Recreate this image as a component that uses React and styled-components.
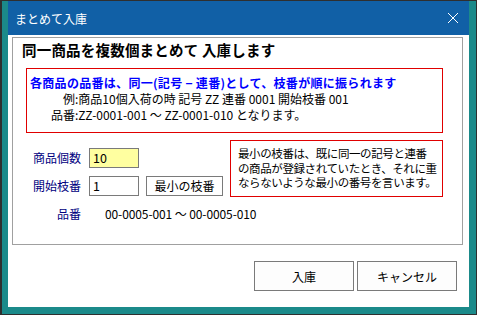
import React from "react";
import styled, { createGlobalStyle } from "styled-components";

const Global = createGlobalStyle`
  html, body { margin: 0; padding: 0; background: #2b2b2b; }
  * { box-sizing: border-box; }
`;

const FONT = `"Noto Sans CJK JP", "Noto Sans", sans-serif`;

const Window = styled.div`
  width: 477px;
  height: 315px;
  background: #1b8a8a;
  border-style: solid;
  border-color: #2f2f2f;
  border-width: 1px 1px 1px 2px;
  padding: 0 7px 7px 6px;
  display: flex;
  flex-direction: column;
  font-family: ${FONT};
  font-size: 12px;
  color: #000;
`;

const TitleBar = styled.div`
  height: 34px;
  flex: none;
  background: #1160a6;
  display: flex;
  align-items: center;
  justify-content: space-between;
  padding: 0 10px 0 7px;
  color: #fff;
  font-size: 12px;
`;

const CloseIcon = () => (
  <svg width="12" height="12" viewBox="0 0 12 12">
    <path d="M1 1 L11 11 M11 1 L1 11" stroke="#fff" strokeWidth="1" fill="none" />
  </svg>
);

const Body = styled.div`
  flex: 1;
  background: #fff;
  display: flex;
  flex-direction: column;
  padding: 2px 6px 0 4px;
`;

const Group = styled.div`
  height: 208px;
  border: 1px solid #a0a0a0;
  padding: 1px 19px 0 13px;
  display: flex;
  flex-direction: column;
`;

const Heading = styled.div`
  font-size: 14.5px;
  font-weight: bold;
  line-height: 22px;
  height: 22px;
  margin-left: -4px;
  letter-spacing: 0.2px;
`;

const RedBox = styled.div`
  border: 1px solid #e00000;
  line-height: ${(p) => p.$lh || 16}px;
  padding: ${(p) => p.$pad};
`;

const InfoBox = styled(RedBox)`
  height: 65px;
  margin-top: 7px;
`;

const InfoLine = styled.div`
  color: ${(p) => (p.$blue ? "#0000ff" : "#000")};
  font-weight: ${(p) => (p.$blue ? "bold" : "normal")};
  padding-left: ${(p) => p.$indent || 0}px;
  line-height: ${(p) => p.$lh || 16}px;
  letter-spacing: ${(p) => (p.$blue ? "0.3px" : "0")};
  white-space: nowrap;
`;

const Lower = styled.div`
  margin-top: 7px;
  display: grid;
  grid-template-columns: minmax(0, 1fr) 213px;
  align-items: start;
`;

const Form = styled.div`
  display: grid;
  grid-template-columns: 48px auto;
  column-gap: 8px;
  row-gap: 8px;
  margin-top: 8px;
  margin-left: 7px;
  width: max-content;
`;

const Label = styled.div`
  color: #000080;
  text-align: right;
  height: 20px;
  line-height: 20px;
  white-space: nowrap;
`;

const FieldRow = styled.div`
  display: flex;
  gap: 7px;
  align-items: center;
`;

const Input = styled.div`
  width: 50px;
  height: 20px;
  border: 1px solid #7a7a7a;
  background: ${(p) => (p.$yellow ? "#ffffa0" : "#fff")};
  padding-left: 3px;
  line-height: 18px;
  font-size: 12.5px;
`;

const SmallButton = styled.div`
  width: 77px;
  height: 20px;
  border: 1px solid #7a7a7a;
  background: #fff;
  text-align: center;
  line-height: 18px;
`;

const Value = styled.div`
  height: 20px;
  line-height: 20px;
  padding-left: 16px;
  white-space: nowrap;
  letter-spacing: -0.1px;
`;

const NoteBox = styled(RedBox)`
  height: 57px;
  font-size: 11.5px;
  letter-spacing: -0.4px;
  white-space: nowrap;
`;

const ButtonRow = styled.div`
  display: flex;
  justify-content: flex-end;
  gap: 3px;
  margin-top: 16px;
  padding-right: 6px;
`;

const Button = styled.div`
  width: 100px;
  height: 30px;
  border: 1px solid #7a7a7a;
  background: #fdfdfd;
  display: flex;
  align-items: center;
  justify-content: center;
`;

export default function App() {
  return (
    <>
      <Global />
      <Window>
        <TitleBar>
          <span>まとめて入庫</span>
          <CloseIcon />
        </TitleBar>
        <Body>
          <Group>
            <Heading>同一商品を複数個まとめて 入庫します</Heading>
            <InfoBox $pad="5px 3px 0 3px">
              <InfoLine $blue $lh={17}>各商品の品番は、同一(記号 − 連番)として、枝番が順に振られます</InfoLine>
              <InfoLine $indent={33}>例:商品10個入荷の時 記号 ZZ 連番 0001 開始枝番 001</InfoLine>
              <InfoLine $indent={21}>品番:ZZ-0001-001 〜 ZZ-0001-010 となります。</InfoLine>
            </InfoBox>
            <Lower>
              <Form>
                <Label>商品個数</Label>
                <FieldRow>
                  <Input $yellow>10</Input>
                </FieldRow>
                <Label>開始枝番</Label>
                <FieldRow>
                  <Input>1</Input>
                  <SmallButton>最小の枝番</SmallButton>
                </FieldRow>
                <Label>品番</Label>
                <Value>00-0005-001 〜 00-0005-010</Value>
              </Form>
              <NoteBox $pad="5px 0 0 7px" $lh={14.5}>
                最小の枝番は、既に同一の記号と連番
                <br />
                の商品が登録されていたとき、それに重
                <br />
                ならないような最小の番号を言います。
              </NoteBox>
            </Lower>
          </Group>
          <ButtonRow>
            <Button>入庫</Button>
            <Button>キャンセル</Button>
          </ButtonRow>
        </Body>
      </Window>
    </>
  );
}
